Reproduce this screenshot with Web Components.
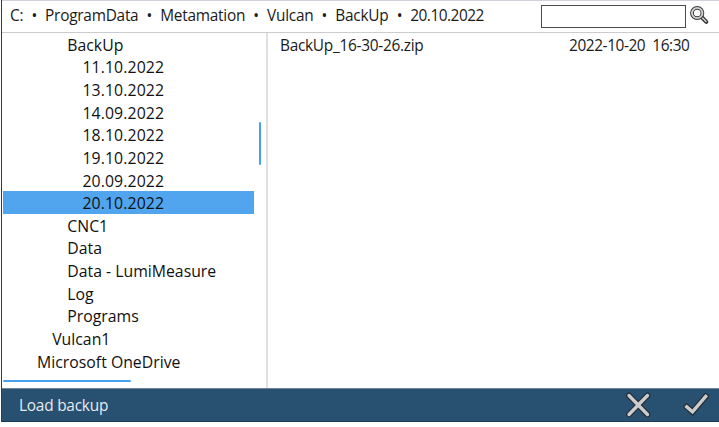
<!DOCTYPE html>
<html lang="en">
<head>
<meta charset="utf-8">
<title>Load backup</title>
<style>
html,body{margin:0;height:100%;background:#fff;overflow:hidden}
body{font:15.4px/22.64px "Open Sans","Noto Sans",sans-serif;color:#1a1a1a}
</style>
</head>
<body>
<backup-dialog></backup-dialog>
<script>
const define=(name,html,setup)=>customElements.define(name,class extends HTMLElement{
  connectedCallback(){
    if(this.shadowRoot)return;
    const t=document.createElement('template');
    t.innerHTML=html;
    this.attachShadow({mode:'open'}).append(t.content.cloneNode(true));
    if(setup)setup(this);
  }
});

define('path-crumb',`<style>
:host{display:block;white-space:pre;letter-spacing:-.24px}
:host(:last-child){letter-spacing:-.48px}
:host(:not(:first-child))::before{content:"•";display:inline-block;width:21.8px;text-align:center}
</style><slot></slot>`);

define('search-box',`<style>
:host{display:flex;gap:4px;align-items:flex-start}
input{box-sizing:border-box;width:145px;height:23px;margin:0;padding:0 4px;border:1px solid #4c4a4c;border-radius:0;background:#fff;outline:0;font:inherit}
svg{display:block;width:20px;height:20px}
</style><input aria-label="Search"><svg viewBox="0 0 20 20" fill="none">
<path d="M11.5 12L16.3 16.8" stroke="#303030" stroke-width="4" stroke-linecap="round"/>
<path d="M11.3 11.8L16 16.5" stroke="#ddd" stroke-width="1.5" stroke-linecap="round"/>
<circle cx="7.2" cy="8" r="5.2" fill="#fff" stroke="#3c3c3c" stroke-width="3.8"/>
<circle cx="7.2" cy="8" r="5.2" stroke="#d4d4d4" stroke-width="1.8"/>
</svg>`);

define('path-bar',`<style>
:host{display:flex;box-sizing:border-box;height:33px;border-top:1px solid #cfd3d9;border-bottom:1px solid #ccc;padding-left:8px;justify-content:space-between}
nav{display:flex;padding-top:4px}
search-box{padding:4px 9px 0 0}
</style><nav><slot></slot></nav><search-box></search-box>`);

define('tree-item',`<style>
:host{display:block;box-sizing:border-box;height:22.64px;width:251px;padding:.8px 0 0 calc(19px + var(--level)*15.1px);color:#111;white-space:pre}
:host([level="4"]){letter-spacing:.12px}
:host([selected]){background:#50a5ee}
</style><slot></slot>`,el=>el.style.setProperty('--level',el.getAttribute('level')));

define('folder-tree',`<style>
:host{display:grid;box-sizing:border-box;width:266px;grid-template:1fr 3px / 1fr 3px;padding:0 4px 5px 1px;border-right:2px solid #e0e0e0;font-size:15.8px}
.v{width:2px;height:43px;margin-top:89px;border-radius:1px;background:#45a0f0}
.h{width:128px;height:2px;border-radius:1px;background:#45a0f0}
</style><div class="items"><slot></slot></div><div class="v"></div><div class="h"></div>`);

define('file-row',`<style>
:host{display:flex;justify-content:space-between;padding:2px 29.5px 0 12px;white-space:pre;letter-spacing:-.27px}
span{letter-spacing:-.42px}
</style><slot></slot><span><slot name="date"></slot></span>`);

define('action-bar',`<style>
:host{display:flex;align-items:center;box-sizing:border-box;height:34px;padding:0 10px 0 17px;border-top:1px solid #718596;border-bottom:1px solid #1c3a55;background:#285070;color:#e6ebf0;letter-spacing:-.22px}
span{flex:1;padding-top:2px}
svg{display:block;width:26px;height:26px;margin-left:32px}
</style><span><slot></slot></span>
<svg viewBox="0 0 26 26" fill="none" stroke-linecap="round"><g stroke="#202a33" stroke-width="5.6"><path d="M4 3.5L22.5 22.5M22.5 3.5L4 22.5"/></g><path d="M4 3.5L22.5 22.5M22.5 3.5L4 22.5" stroke="#ccc" stroke-width="3.4"/></svg>
<svg viewBox="0 0 26 26" fill="none" stroke-linecap="square"><path d="M3.7 14.8L9.5 19.9L22.7 4.5" stroke="#202a33" stroke-width="5.6"/><path d="M3.7 14.8L9.5 19.9L22.7 4.5" stroke="#ccc" stroke-width="3.4"/></svg>`);

define('backup-dialog',`<style>
:host{display:grid;box-sizing:border-box;width:718px;height:422px;margin-left:1px;grid-template-rows:33px 1fr 34px;border-left:1px solid #1f3e59}
main{display:flex;min-height:0}
section{flex:1}
</style>
<path-bar><path-crumb>C:</path-crumb><path-crumb>ProgramData</path-crumb><path-crumb>Metamation</path-crumb><path-crumb>Vulcan</path-crumb><path-crumb>BackUp</path-crumb><path-crumb>20.10.2022</path-crumb></path-bar>
<main><folder-tree>
<tree-item level="3">BackUp</tree-item><tree-item level="4">11.10.2022</tree-item><tree-item level="4">13.10.2022</tree-item><tree-item level="4">14.09.2022</tree-item><tree-item level="4">18.10.2022</tree-item><tree-item level="4">19.10.2022</tree-item><tree-item level="4">20.09.2022</tree-item><tree-item level="4" selected>20.10.2022</tree-item><tree-item level="3">CNC1</tree-item><tree-item level="3">Data</tree-item><tree-item level="3">Data - LumiMeasure</tree-item><tree-item level="3">Log</tree-item><tree-item level="3">Programs</tree-item><tree-item level="2">Vulcan1</tree-item><tree-item level="1">Microsoft OneDrive</tree-item>
</folder-tree><section><file-row>BackUp_16-30-26.zip<span slot="date" style="letter-spacing:-.42px">2022-10-20  16:30</span></file-row></section></main>
<action-bar>Load backup</action-bar>`);
</script>
</body>
</html>
